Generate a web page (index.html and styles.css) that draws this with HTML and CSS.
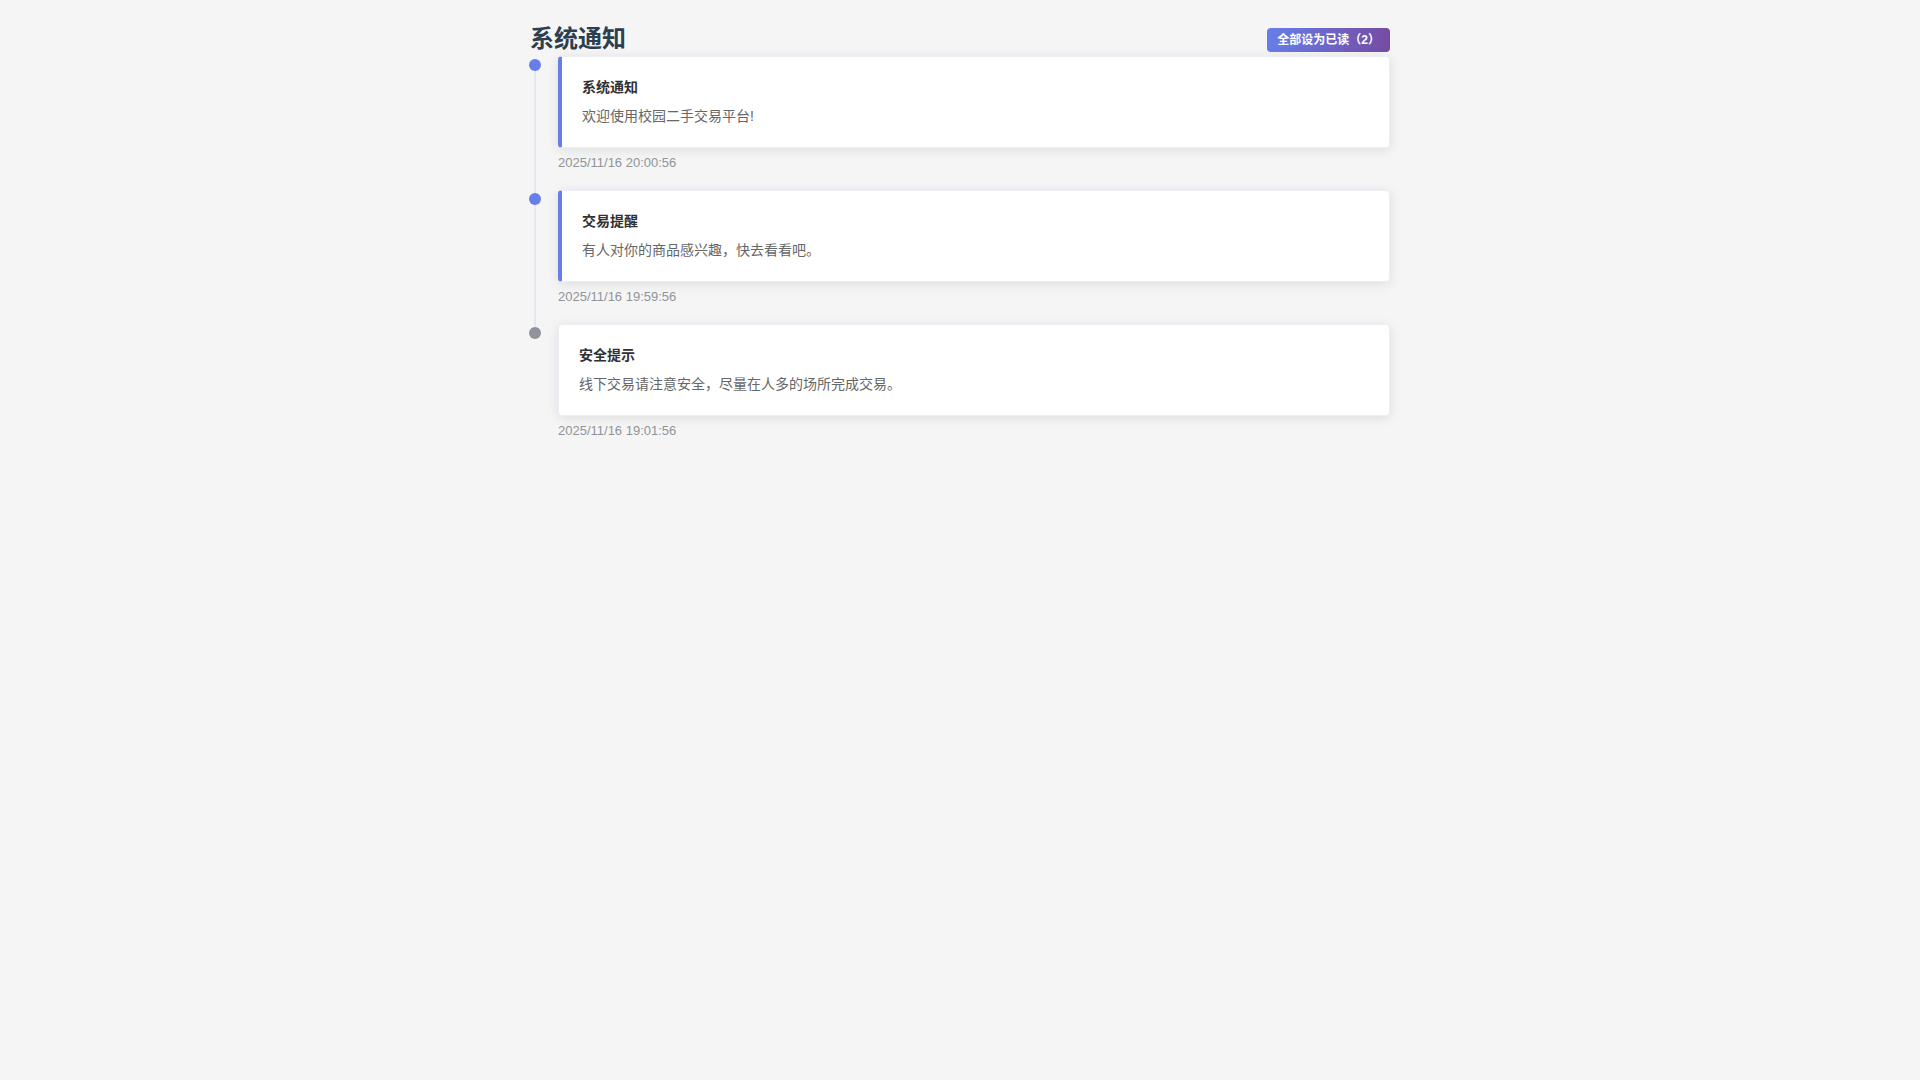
FILE: index.html
```html
<!DOCTYPE html>
<html lang="zh-CN">
<head>
<meta charset="utf-8">
<title>系统通知</title>
<link rel="stylesheet" href="styles.css">
</head>
<body>
<div class="page">
  <div class="header">
    <h2 class="title">系统通知</h2>
    <button class="read-all">全部设为已读（2）</button>
  </div>
  <ul class="timeline">
    <li class="item">
      <div class="tail"></div>
      <div class="node unread"></div>
      <div class="wrapper">
        <div class="card unread-card">
          <div class="card-body">
            <h4 class="msg-title">系统通知</h4>
            <p class="msg-text">欢迎使用校园二手交易平台!</p>
          </div>
        </div>
        <div class="timestamp">2025/11/16 20:00:56</div>
      </div>
    </li>
    <li class="item">
      <div class="tail"></div>
      <div class="node unread"></div>
      <div class="wrapper">
        <div class="card unread-card">
          <div class="card-body">
            <h4 class="msg-title">交易提醒</h4>
            <p class="msg-text">有人对你的商品感兴趣，快去看看吧。</p>
          </div>
        </div>
        <div class="timestamp">2025/11/16 19:59:56</div>
      </div>
    </li>
    <li class="item">
      <div class="tail"></div>
      <div class="node read"></div>
      <div class="wrapper">
        <div class="card">
          <div class="card-body">
            <h4 class="msg-title">安全提示</h4>
            <p class="msg-text">线下交易请注意安全，尽量在人多的场所完成交易。</p>
          </div>
        </div>
        <div class="timestamp">2025/11/16 19:01:56</div>
      </div>
    </li>
  </ul>
</div>
</body>
</html>
```
FILE: styles.css
```css
html, body {
  margin: 0;
  padding: 0;
  background: #f5f5f5;
  font-family: "Liberation Sans", "Noto Sans CJK SC", sans-serif;
}
.page {
  max-width: 860px;
  margin: 0 auto;
  padding-top: 20px;
}
.header {
  display: flex;
  justify-content: space-between;
  align-items: center;
  height: 38px;
}
.title {
  margin: 0;
  font-size: 24px;
  line-height: 36px;
  font-weight: bold;
  color: #2c3e50;
}
.read-all {
  border: none;
  border-radius: 4px;
  padding: 4px 10px;
  height: 24px;
  margin-top: 2px;
  font-family: "Liberation Sans", "Noto Sans CJK SC", sans-serif;
  font-size: 12px;
  font-weight: bold;
  line-height: 16px;
  color: #fff;
  background: linear-gradient(90deg, #667eea, #764ba2);
  cursor: pointer;
}
.timeline {
  list-style: none;
  margin: 0;
  padding: 0;
}
.item {
  position: relative;
  padding-bottom: 21px;
}
.item:first-child {
  margin-top: 1px;
}
.tail {
  position: absolute;
  left: 4px;
  top: 0;
  height: 100%;
  border-left: 2px solid #e4e7ed;
}
.item:last-child .tail {
  display: none;
}
.node {
  position: absolute;
  left: -1px;
  top: 0;
  width: 12px;
  height: 12px;
  border-radius: 50%;
}
.node.unread { background: #667eea; }
.node.read { background: #909399; }
.wrapper {
  position: relative;
  top: -3px;
  padding-left: 28px;
}
.card {
  background: #fff;
  border: 1px solid #ebeef5;
  border-radius: 4px;
  box-shadow: 0 2px 12px 0 rgba(0, 0, 0, 0.1);
  overflow: hidden;
}
.unread-card {
  border-left: 4px solid #667eea;
}
.card-body {
  padding: 20px;
}
.msg-title {
  margin: 0 0 7px;
  font-size: 14px;
  line-height: 21px;
  font-weight: bold;
  color: #303133;
}
.msg-text {
  margin: 0;
  font-size: 14px;
  line-height: 22px;
  color: #666;
}
.timestamp {
  margin-top: 8px;
  font-size: 13px;
  line-height: 1;
  color: #909399;
}
```
